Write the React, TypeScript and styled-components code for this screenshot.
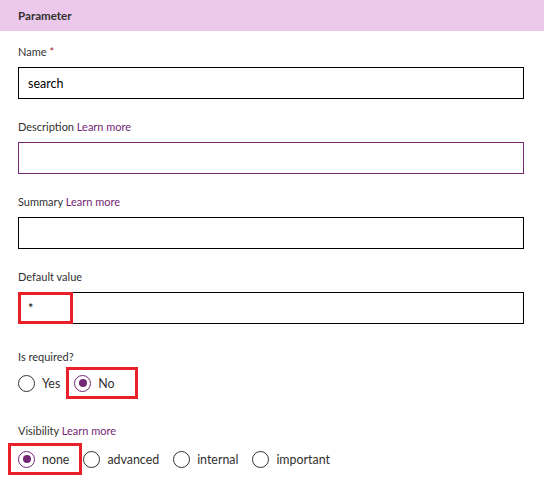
import React from "react";
import styled, { createGlobalStyle, css } from "styled-components";

const FONT = `"Segoe UI", Lato, "Noto Sans", sans-serif`;
const PURPLE = "#742774";
const RED = "#e8202a";

const GlobalStyle = createGlobalStyle`
  html, body { margin: 0; padding: 0; background: #ffffff; }
  body { font-family: ${FONT}; color: #323130; }
`;

const Panel = styled.div`
  width: 544px;
  height: 494px;
  background: #ffffff;
  font-family: ${FONT};
`;

const Header = styled.div`
  height: 31px;
  background: #ecc8ec;
  display: flex;
  align-items: center;
  padding-left: 18px;
  font-size: 11.6px;
  font-weight: 700;
  color: #323130;
`;

const Form = styled.div`
  display: flex;
  flex-direction: column;
  padding: 13px 20px 0 18px;
`;

const Field = styled.div<{ $gap?: number }>`
  display: flex;
  flex-direction: column;
  margin-bottom: ${(p) => p.$gap ?? 20}px;
`;

const Label = styled.div`
  height: 16px;
  line-height: 16px;
  font-size: 11px;
  color: #323130;
  margin-bottom: 7px;
`;

const Link = styled.span`
  color: ${PURPLE};
`;

const Required = styled.span`
  color: #a4262c;
`;

const InputBox = styled.div<{ $focused?: boolean }>`
  position: relative;
  box-sizing: border-box;
  height: 32px;
  border: 1px solid ${(p) => (p.$focused ? PURPLE : "#000000")};
  display: flex;
  align-items: center;
  padding-left: 9px;
  font-size: 12.5px;
  color: #000000;
`;

const Highlight = styled.div`
  position: absolute;
  left: -1px;
  top: -1px;
  width: 55px;
  height: 32px;
  box-sizing: border-box;
  border: 3px solid ${RED};
`;

const Group = styled.div`
  display: flex;
  flex-direction: column;
`;

const GroupLabel = styled(Label)<{ $gap?: number }>`
  margin-bottom: ${(p) => p.$gap ?? 2}px;
`;

const RadioRow = styled.div<{ $last?: boolean }>`
  display: flex;
  align-items: center;
  height: 32px;
  margin-bottom: ${(p) => (p.$last ? 0 : 24)}px;
`;

const Option = styled.div<{ $hl?: [number, number] }>`
  position: relative;
  display: flex;
  align-items: center;
  height: 32px;
  gap: 7px;
  margin-right: 14px;
  font-size: 12.4px;
  color: #323130;
  ${(p) =>
    p.$hl &&
    css`
      &::after {
        content: "";
        position: absolute;
        left: -${p.$hl[0]}px;
        right: -${p.$hl[1]}px;
        top: 0;
        bottom: 0;
        border: 3px solid ${RED};
      }
    `}
`;

const Circle = styled.span<{ $checked?: boolean }>`
  box-sizing: border-box;
  width: 17px;
  height: 17px;
  border-radius: 50%;
  border: 1px solid ${(p) => (p.$checked ? PURPLE : "#323130")};
  display: flex;
  align-items: center;
  justify-content: center;
  &::before {
    content: "";
    width: 8px;
    height: 8px;
    border-radius: 50%;
    background: ${(p) => (p.$checked ? PURPLE : "transparent")};
  }
`;

type Opt = { label: string; checked?: boolean; hl?: [number, number] };

const Radio: React.FC<Opt> = ({ label, checked, hl }) => (
  <Option $hl={hl}>
    <Circle $checked={checked} />
    <span>{label}</span>
  </Option>
);

export default function App() {
  const required: Opt[] = [
    { label: "Yes" },
    { label: "No", checked: true, hl: [8, 23] },
  ];
  const visibility: Opt[] = [
    { label: "none", checked: true, hl: [10, 13] },
    { label: "advanced" },
    { label: "internal" },
    { label: "important" },
  ];
  return (
    <>
      <GlobalStyle />
      <Panel>
        <Header>Parameter</Header>
        <Form>
          <Field>
            <Label>
              Name <Required>*</Required>
            </Label>
            <InputBox>search</InputBox>
          </Field>
          <Field>
            <Label>
              Description <Link>Learn more</Link>
            </Label>
            <InputBox $focused />
          </Field>
          <Field>
            <Label>
              Summary <Link>Learn more</Link>
            </Label>
            <InputBox />
          </Field>
          <Field $gap={25}>
            <Label>Default value</Label>
            <InputBox>
              *
              <Highlight />
            </InputBox>
          </Field>
          <Group>
            <GroupLabel>Is required?</GroupLabel>
            <RadioRow>
              {required.map((o) => (
                <Radio key={o.label} {...o} />
              ))}
            </RadioRow>
          </Group>
          <Group>
            <GroupLabel $gap={4}>
              Visibility <Link>Learn more</Link>
            </GroupLabel>
            <RadioRow $last>
              {visibility.map((o) => (
                <Radio key={o.label} {...o} />
              ))}
            </RadioRow>
          </Group>
        </Form>
      </Panel>
    </>
  );
}
